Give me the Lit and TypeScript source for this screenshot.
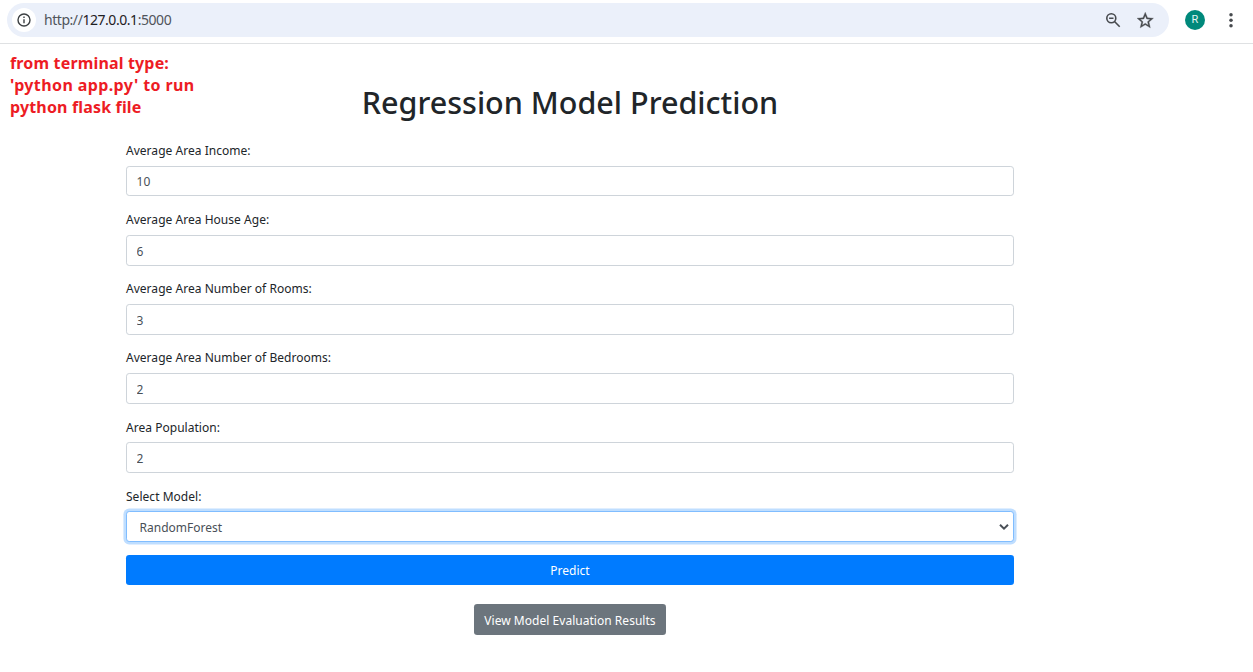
import { LitElement, html, css } from "lit";
import { customElement, property } from "lit/decorators.js";

@customElement("browser-bar")
class BrowserBar extends LitElement {
  static styles = css`
    :host { display: block; }
    .bar { height: 44px; box-sizing: border-box; display: flex; align-items: flex-start; padding: 3px 0 0 7px; border-bottom: 1px solid #dfe1e3; background: #fff; }
    .omnibox { width: 1162px; height: 34px; box-sizing: border-box; border-radius: 17px; background: #ebf0fa; display: flex; align-items: center; padding: 0 15px 0 5px; }
    .info { width: 24px; height: 24px; border-radius: 50%; background: #fff; display: flex; align-items: center; justify-content: center; }
    .url { margin-left: 8px; font: 14px/20px "Noto Sans", "Open Sans", sans-serif; letter-spacing: -0.45px; color: #50545a; flex: 1; white-space: nowrap; }
    .host { color: #1f2023; }
    .icons { display: flex; gap: 15px; }
    .avatar { width: 20px; height: 20px; margin: 7px 0 0 16px; border-radius: 50%; background: #00897b; color: #e4f4f2; font: 11px/20px Roboto, sans-serif; text-align: center; }
    .more { margin: 9px 0 0 18px; }
    svg { display: block; }
  `;
  render() {
    return html`
      <div class="bar">
        <div class="omnibox">
          <div class="info">
            <svg width="14" height="14" viewBox="0 0 14 14" fill="none" stroke="#3c4043" stroke-width="1.4">
              <circle cx="7" cy="7" r="6"></circle><path d="M7 6.3v4M7 3.6v1.5"></path>
            </svg>
          </div>
          <div class="url">http://<span class="host">127.0.0.1</span>:5000</div>
          <div class="icons">
            <svg width="17" height="17" viewBox="0 0 17 17" fill="none" stroke="#474a4e" stroke-width="1.6">
              <circle cx="6.3" cy="6.3" r="4.5"></circle><path d="M9.5 9.5l5.2 5.2M4.1 6.3h4.4"></path>
            </svg>
            <svg width="17" height="17" viewBox="1.9 1.6 20.8 20.8" fill="#474a4e" stroke="#474a4e" stroke-width="0.4">
              <path d="M22 9.24l-7.19-.62L12 2 9.19 8.63 2 9.24l5.46 4.73L5.82 21 12 17.27 18.18 21l-1.63-7.03L22 9.24zM12 15.4l-3.76 2.27 1-4.28-3.32-2.88 4.38-.38L12 6.1l1.71 4.04 4.38.38-3.32 2.88 1 4.28L12 15.4z"></path>
            </svg>
          </div>
        </div>
        <div class="avatar">R</div>
        <svg class="more" width="16" height="16" viewBox="0 0 16 16" fill="#474a4e">
          <circle cx="8" cy="2.7" r="1.75"></circle><circle cx="8" cy="8.2" r="1.75"></circle><circle cx="8" cy="13.7" r="1.75"></circle>
        </svg>
      </div>`;
  }
}

@customElement("form-field")
class FormField extends LitElement {
  @property() label = "";
  @property() value = "";
  @property({ type: Boolean }) select = false;
  static styles = css`
    :host { display: block; margin-bottom: 13.65px; font-family: "Noto Sans", "Open Sans", sans-serif; }
    label { display: block; font-size: 12px; line-height: 19.2px; margin-bottom: 5.4px; color: #212529; letter-spacing: 0.03px; }
    .box { display: grid; align-items: center; }
    .control { grid-area: 1 / 1; width: 100%; height: 30.9px; box-sizing: border-box; margin: 0; padding: 1.9px 9.6px 0; border: 1px solid #ced4da; border-radius: 3.2px; background: #fff; color: #495057; font: 12px/19.2px "Noto Sans", "Open Sans", sans-serif; outline: none; }
    .picker { appearance: none; padding-left: 12.6px; border-color: #80bdff; box-shadow: 0 0 0 2.56px rgba(0, 123, 255, 0.25); }
    .arrow { grid-area: 1 / 1; justify-self: end; margin-right: 5px; pointer-events: none; }
  `;
  render() {
    return html`
      <label>${this.label}</label>
      <div class="box">
        ${this.select
          ? html`<select class="control picker"><option>${this.value}</option></select>
              <svg class="arrow" width="10" height="8" viewBox="0 0 10 8" fill="none" stroke="#495057" stroke-width="2"><path d="M1 1.8l4 3.9 4-3.9"></path></svg>`
          : html`<input class="control" .value=${this.value} />`}
      </div>`;
  }
}

@customElement("app-root")
class AppRoot extends LitElement {
  static styles = css`
    :host { display: block; height: 672px; overflow: hidden; background: #fff; font-family: "Noto Sans", "Open Sans", sans-serif; }
    .page { position: relative; padding: 39px 0 0 126px; }
    .note { position: absolute; left: 10px; top: 8px; margin: 0; font: 700 16px/22px "Noto Sans", "Open Sans", sans-serif; letter-spacing: 0.16px; color: #ed1c24; white-space: nowrap; }
    .wide { letter-spacing: 0.39px; }
    .content { width: 888px; }
    h1 { margin: 0 0 19.6px; font-size: 30.5px; line-height: 38.4px; font-weight: 500; text-align: center; color: #212529; white-space: nowrap; }
    .btn { display: block; box-sizing: border-box; border: 0; border-radius: 3.2px; color: #fff; font: 12px/19.2px "Noto Sans", "Open Sans", sans-serif; white-space: nowrap; }
    .primary { width: 100%; height: 30px; margin: -0.65px 0 0; padding: 0; background: #007bff; }
    .secondary { width: 192px; height: 31px; margin: 19px auto 0; padding: 1px 0 0; background: #6c757d; letter-spacing: 0.03px; }
  `;
  render() {
    const fields = [
      ["Average Area Income:", "10"],
      ["Average Area House Age:", "6"],
      ["Average Area Number of Rooms:", "3"],
      ["Average Area Number of Bedrooms:", "2"],
      ["Area Population:", "2"],
    ];
    return html`
      <browser-bar></browser-bar>
      <main class="page">
        <p class="note">from terminal type:<br /><span class="wide">'python app.py' to run</span><br />python flask file</p>
        <div class="content">
          <h1>Regression Model Prediction</h1>
          ${fields.map(([l, v]) => html`<form-field .label=${l} .value=${v}></form-field>`)}
          <form-field select .label=${"Select Model:"} .value=${"RandomForest"}></form-field>
          <button class="btn primary">Predict</button>
          <button class="btn secondary">View Model Evaluation Results</button>
        </div>
      </main>`;
  }
}
